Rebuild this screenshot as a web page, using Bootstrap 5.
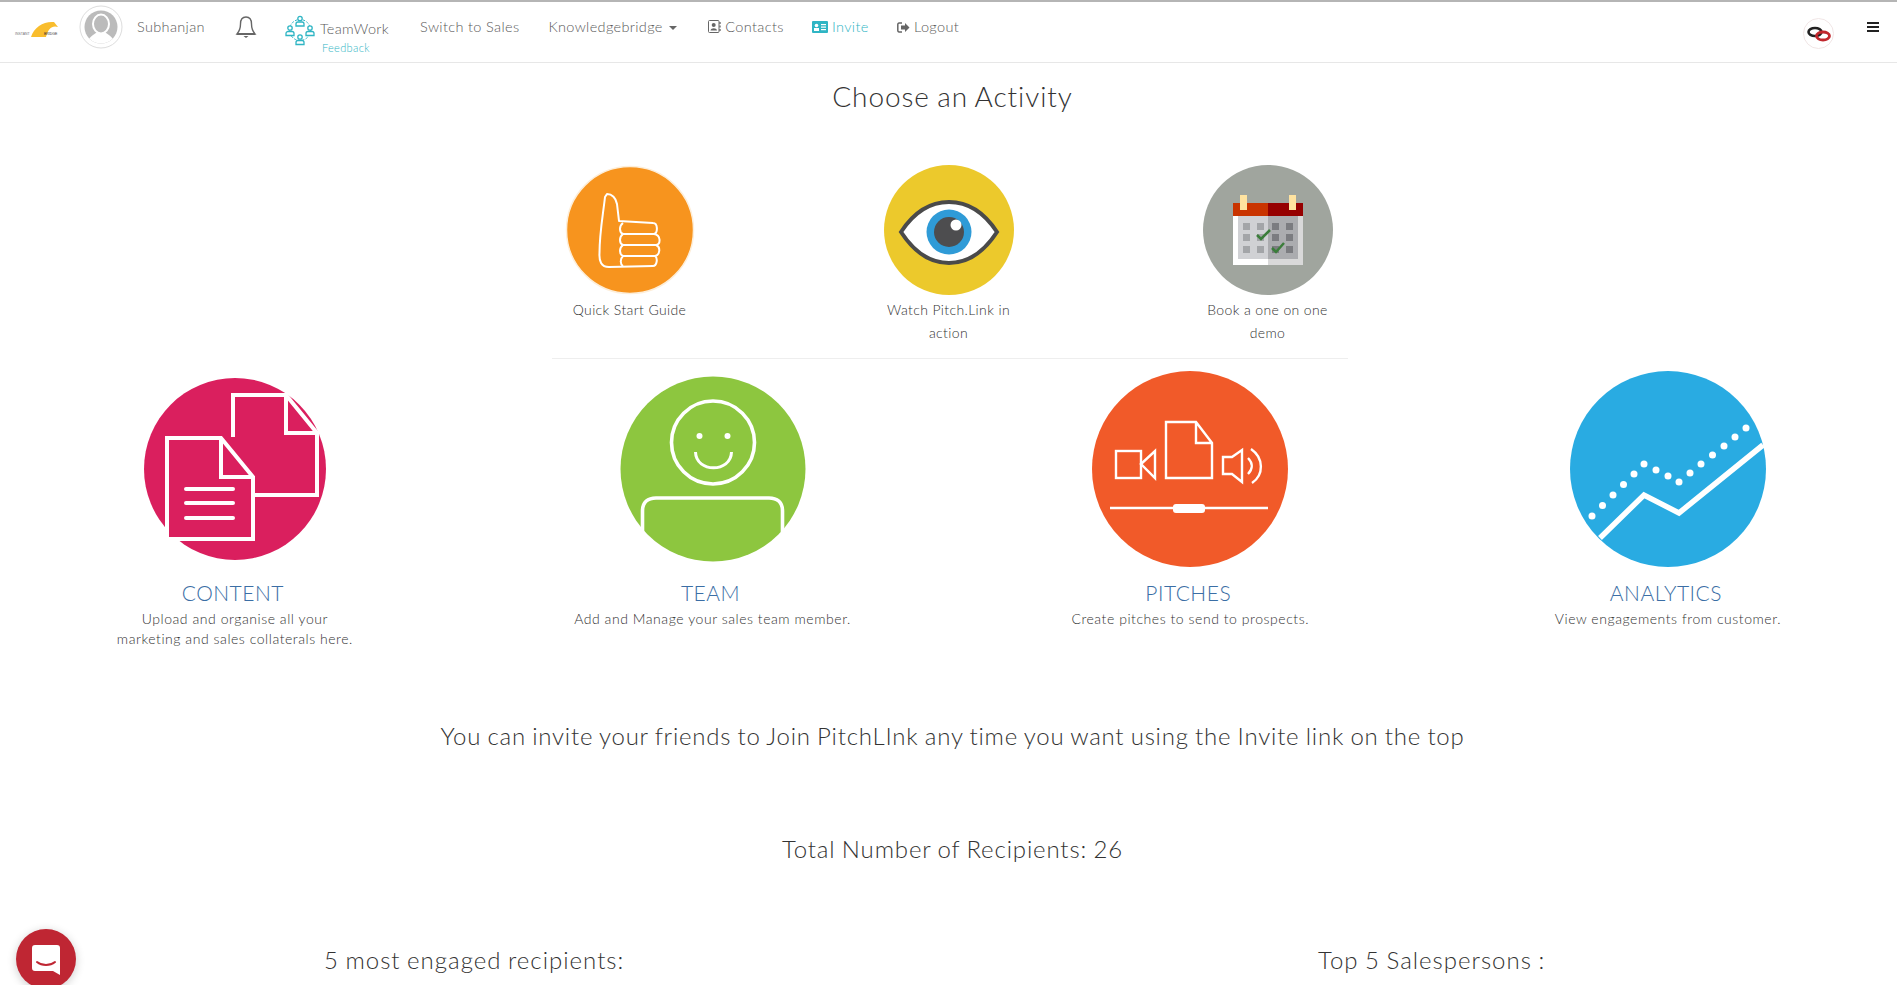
<!DOCTYPE html>
<html lang="en">
<head>
    <meta charset="UTF-8">
    <title>PitchLink</title>
    <link href="https://cdn.jsdelivr.net/npm/bootstrap@5.3.0/dist/css/bootstrap.min.css" rel="stylesheet">
    <style>
        html, body { height: 100%; overflow: hidden; }
        body { font-family: Lato, "Open Sans", sans-serif; font-weight: 300; color: #333; background: #fff; border-top: 2px solid #b5b5b5; }
        .top-bar { height: 61px; border-bottom: 1px solid #e7e7e7; padding: 0 0 10px 14px; }
        .top-link { color: #5a5a5a; font-size: 14.5px; text-decoration: none; letter-spacing: .35px; white-space: nowrap; }
        .top-link svg { vertical-align: -1px; }
        .teal-link { color: #2fb5c4; }
        .brand-logo { margin-top: 6px; margin-right: 8px; }
        .user-pic { margin-left: 9px; }
        .user-name { margin-left: 14px; }
        .bell-icon { margin-left: 30px; }
        .team-icon { margin-left: 27px; margin-top: 6px; }
        .team-stack { line-height: 1; position: relative; margin-top: 2px; margin-left: 4px; }
        .feedback-link { position: absolute; left: 2px; top: 22px; font-size: 11px; color: #2fb5c4; }
        .gap-switch { margin-left: 31px; }
        .gap-know { margin-left: 29px; }
        .gap-contacts { margin-left: 31px; }
        .gap-invite { margin-left: 28px; }
        .gap-logout { margin-left: 28px; }
        .caret-down { display: inline-block; border-top: 4px solid #666; border-left: 4px solid transparent; border-right: 4px solid transparent; vertical-align: 2px; margin-left: 2px; }
        .link-badge { width: 31px; height: 31px; border: 1px solid #f1e6e6; border-radius: 50%; margin-right: 33px; margin-top: 13px; }
        .burger-icon { width: 12px; height: 10px; border-top: 2px solid #222; border-bottom: 2px solid #222; position: relative; margin-right: 18px; }
        .burger-icon::after { content: ""; position: absolute; left: 0; right: 0; top: 2px; border-top: 2px solid #222; }
        .page-title { font-size: 28px; font-weight: 300; color: #333; letter-spacing: .9px; word-spacing: -1px; margin: 16px 0 0; padding-left: 8px; line-height: 34px; }
        .quick-grid { width: 957px; margin-top: 52px; margin-left: 470px; }
        .quick-cell { width: 319px; }
        .quick-label { width: 150px; font-size: 14px; line-height: 23px; letter-spacing: .38px; margin-top: 3px; color: #333; }
        .quick-rule { width: 796px; height: 1px; background: #eee; margin-left: 82px; margin-top: 14px; }
        .module-grid { width: 1912px; margin-left: -4px; margin-top: 11px; }
        .module-cell { width: 477.7px; }
        .module-art { height: 198px; }
        .module-name { font-size: 21px; font-weight: 300; color: #3b6ea5; letter-spacing: .5px; line-height: 26px; margin: 12px 0 3px; padding-right: 4px; }
        .module-text { font-size: 14px; line-height: 20px; color: #333; letter-spacing: .55px; margin: 0 auto; }
        .module-wrap { width: 245px; }
        .big-line { font-size: 24px; color: #333; letter-spacing: .85px; word-spacing: -1px; line-height: 30px; }
        .invite-line { letter-spacing: .78px; margin-top: 72px; padding-left: 8px; }
        .total-line { margin-top: 83px; padding-left: 8px; }
        .bottom-row { margin-top: 81px; padding-left: 324px; }
        .bottom-head { letter-spacing: 1px; }
        .bottom-left { width: 994px; }
        .chat-bubble { position: fixed; left: 16px; top: 929px; width: 60px; height: 60px; border-radius: 50%; background: #bf2633; box-shadow: 0 2px 10px rgba(0,0,0,.2); }
        .chat-glyph { margin-top: 2px; }
    </style>
</head>
<body>
    <nav class="top-bar d-flex align-items-center">
        <svg width="48" height="22" viewBox="0 0 48 22" class="brand-logo flex-shrink-0">
            <path d="M17 18 C20 8 30 2 40 3 L44 8 C38 6 34 10 32 18 Z" fill="#f9bd2d"/>
            <text x="1" y="16" font-size="3.500" fill="#777" font-family="Liberation Sans">INSTANT</text>
            <text x="30" y="16" font-size="3.500" fill="#333" font-family="Liberation Sans">BRIDGE</text>
        </svg>
        <svg width="44" height="44" viewBox="0 0 44 44" class="user-pic flex-shrink-0">
            <defs><clipPath id="avatarClip"><circle cx="22" cy="22" r="16.500"/></clipPath></defs>
            <circle cx="22" cy="22" r="21" fill="#fff" stroke="#ddd"/>
            <circle cx="22" cy="22" r="16.500" fill="#bbb"/>
            <g clip-path="url(#avatarClip)">
                <path d="M7 42 C8 32 15 30 18 27 L26 27 C29 30 36 32 37 42 Z" fill="#fff"/>
                <ellipse cx="22" cy="19" rx="8" ry="9.500" fill="#bbb" stroke="#fff" stroke-width="2"/>
            </g>
        </svg>
        <a href="#" class="top-link user-name">Subhanjan</a>
        <svg width="22" height="24" viewBox="0 0 22 24" class="bell-icon flex-shrink-0">
            <path d="M11 2 C7 2 5.500 5.500 5.500 9 C5.500 14 4.500 16 2 19 L20 19 C17.500 16 16.500 14 16.500 9 C16.500 5.500 15 2 11 2 Z" fill="none" stroke="#666" stroke-width="1.400"/>
            <path d="M2 19 H20" stroke="#666" stroke-width="2"/>
            <path d="M8.500 21 H13.500 L11 23 Z" fill="#666"/>
        </svg>
        <svg width="32" height="32" viewBox="0 0 32 32" class="team-icon flex-shrink-0">
            <circle cx="16" cy="16" r="10.500" fill="none" stroke="#2fb5c4" stroke-width="1" stroke-dasharray="2.500 1.500"/>
            <g fill="#fff" stroke="#2fb5c4" stroke-width="1.300">
                <circle cx="16" cy="4.500" r="2.200"/><path d="M12 12 V10 a2 2 0 0 1 2 -2 h4 a2 2 0 0 1 2 2 V12 Z"/>
                <circle cx="6" cy="14" r="2.200"/><path d="M2 21.500 V19.500 a2 2 0 0 1 2 -2 h4 a2 2 0 0 1 2 2 V21.500 Z"/>
                <circle cx="26" cy="14" r="2.200"/><path d="M22 21.500 V19.500 a2 2 0 0 1 2 -2 h4 a2 2 0 0 1 2 2 V21.500 Z"/>
                <circle cx="16" cy="23" r="2.200"/><path d="M12 30.500 V28.500 a2 2 0 0 1 2 -2 h4 a2 2 0 0 1 2 2 V30.500 Z"/>
            </g>
        </svg>
        <span class="team-stack"><a href="#" class="top-link">TeamWork</a><a href="#" class="top-link feedback-link">Feedback</a></span>
        <a href="#" class="top-link gap-switch">Switch to Sales</a>
        <a href="#" class="top-link gap-know">Knowledgebridge <span class="caret-down"></span></a>
        <a href="#" class="top-link gap-contacts">
            <svg width="13" height="13" viewBox="0 0 13 13"><rect x="0.500" y="0.500" width="10.500" height="12" rx="1" fill="#fff" stroke="#666"/><circle cx="5.700" cy="5" r="2" fill="#666"/><path d="M2.500 10.500 C3 7.500 8.500 7.500 9 10.500 Z" fill="#666"/><path d="M12 2 V4 M12 5.500 V7.500 M12 9 V11" stroke="#666" stroke-width="1.300"/></svg>
            Contacts</a>
        <a href="#" class="top-link teal-link gap-invite">
            <svg width="16" height="12" viewBox="0 0 16 12"><rect width="16" height="12" rx="1" fill="#2fb5c4"/><circle cx="4.500" cy="4.500" r="1.800" fill="#fff"/><rect x="2" y="7" width="5" height="3" fill="#fff"/><rect x="9" y="3" width="5" height="1.200" fill="#fff"/><rect x="9" y="5.500" width="5" height="1.200" fill="#fff"/><rect x="9" y="8" width="5" height="1.200" fill="#fff"/></svg>
            Invite</a>
        <a href="#" class="top-link gap-logout">
            <svg width="13" height="11" viewBox="0 0 13 11"><path d="M5 1 H2 A1.500 1.500 0 0 0 0.800 2.500 V8.500 A1.500 1.500 0 0 0 2 10 H5" fill="none" stroke="#666" stroke-width="1.500"/><path d="M4 3.500 H8 V1 L12.500 5.500 L8 10 V7.500 H4 Z" fill="#666"/></svg>
            Logout</a>
        <div class="link-badge ms-auto d-flex align-items-center justify-content-center flex-shrink-0">
            <svg width="26" height="18" viewBox="0 0 26 18">
                <ellipse cx="9" cy="7" rx="6.500" ry="4" fill="none" stroke="#222" stroke-width="2.600"/>
                <ellipse cx="17" cy="11" rx="6.500" ry="4" fill="none" stroke="#c1272d" stroke-width="2.800"/>
            </svg>
        </div>
        <div class="burger-icon flex-shrink-0"></div>
    </nav>

    <h1 class="page-title text-center">Choose an Activity</h1>

    <div class="quick-grid">
        <div class="d-flex">
            <div class="quick-cell d-flex flex-column align-items-center">
                <svg width="130" height="130" viewBox="0 0 130 130">
                    <circle cx="65" cy="65" r="63.500" fill="#f7941e" stroke="#fdeed9" stroke-width="1.500"/>
                    <path d="M42 29 C47 29 51 33 52 39 L54 56 L88 58 C93 58 93 68 89 69 C96 70 96 79 91 80 C96 82 95 90 90 91 C93 93 92 101 88 101 L44 102 C36 102 34 96 34.500 88 C34.500 68 38 50 40 32 Z" fill="none" stroke="#fff" stroke-width="2" stroke-linejoin="round"/>
                    <path d="M58 58 C54 61 54 67 58 69 L89 69 M58 69 C54 72 54 78 58 80 L91 80 M58 80 C54 83 54 89 58 91 L90 91 M58 91 C55 94 55 99 58 101" fill="none" stroke="#fff" stroke-width="2"/>
                </svg>
                <div class="quick-label text-center">Quick Start Guide</div>
            </div>
            <div class="quick-cell d-flex flex-column align-items-center">
                <svg width="130" height="130" viewBox="0 0 130 130">
                    <circle cx="65" cy="65" r="65" fill="#ecc92c"/>
                    <path d="M17 67 C32 44 48 37 65 37 C82 37 98 44 113 67 C98 90 82 98 65 98 C48 98 32 90 17 67 Z" fill="#fff" stroke="#4a4a4a" stroke-width="4"/>
                    <circle cx="65" cy="67" r="22.500" fill="#2f9bd7"/>
                    <circle cx="65" cy="67" r="15" fill="#4d4d4f"/>
                    <circle cx="72" cy="60" r="5.500" fill="#fff"/>
                </svg>
                <div class="quick-label text-center">Watch Pitch.Link in action</div>
            </div>
            <div class="quick-cell d-flex flex-column align-items-center">
                <svg width="130" height="130" viewBox="0 0 130 130">
                    <circle cx="65" cy="65" r="65" fill="#a0a59e"/>
                    <rect x="30" y="38" width="35" height="13" fill="#c93400"/>
                    <rect x="65" y="38" width="35" height="13" fill="#960000"/>
                    <rect x="37" y="30" width="7" height="15" fill="#ffe3a0"/>
                    <rect x="86" y="30" width="7" height="15" fill="#ffe3a0"/>
                    <rect x="30" y="51" width="35" height="49" fill="#fff"/>
                    <rect x="65" y="51" width="35" height="49" fill="#d9d9d9"/>
                    <rect x="35" y="51" width="30" height="43" fill="#d0d1d4"/>
                    <rect x="65" y="51" width="30" height="43" fill="#abacaf"/>
                    <g fill="#a3a5a8">
                        <rect x="40" y="58" width="7" height="7"/><rect x="54" y="58" width="7" height="7"/>
                        <rect x="40" y="69" width="7" height="7"/><rect x="54" y="69" width="7" height="7"/>
                        <rect x="40" y="81" width="7" height="7"/><rect x="54" y="81" width="7" height="7"/>
                    </g>
                    <g fill="#7b7c80">
                        <rect x="69" y="58" width="7" height="7"/><rect x="83" y="58" width="7" height="7"/>
                        <rect x="69" y="69" width="7" height="7"/><rect x="83" y="69" width="7" height="7"/>
                        <rect x="69" y="81" width="7" height="7"/><rect x="83" y="81" width="7" height="7"/>
                    </g>
                    <path d="M54 70 L58 74 L67 65 M69 83 L73 87 L81 78" fill="none" stroke="#3b7d3a" stroke-width="2.500"/>
                </svg>
                <div class="quick-label text-center">Book a one on one demo</div>
            </div>
        </div>
        <div class="quick-rule"></div>
    </div>

    <div class="module-grid d-flex">
        <div class="module-cell text-center">
            <div class="module-art d-flex justify-content-center align-items-center">
                <svg width="184" height="184" viewBox="0 0 184 184">
                    <circle cx="92" cy="92" r="91" fill="#da1f5e"/>
                    <path d="M90 60 V18 H143 L174 56 V118 H110" fill="none" stroke="#fff" stroke-width="4"/>
                    <path d="M143 18 V56 H174" fill="none" stroke="#fff" stroke-width="4"/>
                    <path d="M24 61 H78 L110 100 V162 H24 Z" fill="#da1f5e" stroke="#fff" stroke-width="4"/>
                    <path d="M78 61 V100 H110" fill="none" stroke="#fff" stroke-width="4"/>
                    <path d="M43 112 H90 M43 126 H90 M43 141 H90" stroke="#fff" stroke-width="4" stroke-linecap="round"/>
                </svg>
            </div>
            <h2 class="module-name">CONTENT</h2>
            <p class="module-text module-wrap">Upload and organise all your marketing and sales collaterals here.</p>
        </div>
        <div class="module-cell text-center">
            <div class="module-art d-flex justify-content-center align-items-center">
                <svg width="186" height="186" viewBox="0 0 186 186">
                    <circle cx="93" cy="93" r="92.500" fill="#8dc63f"/>
                    <ellipse cx="93" cy="66.500" rx="41.500" ry="41.500" fill="none" stroke="#fff" stroke-width="3.600"/>
                    <circle cx="79.500" cy="60" r="3" fill="#fff"/><circle cx="107.500" cy="60" r="3" fill="#fff"/>
                    <path d="M75.500 76 C76 97 111 97 111.500 76" fill="none" stroke="#fff" stroke-width="3"/>
                    <path d="M22.500 156 V135 C22.500 126 28 122 36 122 H149 C157 122 162.500 126 162.500 135 V156" fill="none" stroke="#fff" stroke-width="3.600"/>
                </svg>
            </div>
            <h2 class="module-name">TEAM</h2>
            <p class="module-text">Add and Manage your sales team member.</p>
        </div>
        <div class="module-cell text-center">
            <div class="module-art d-flex justify-content-center align-items-center">
                <svg width="196" height="196" viewBox="0 0 196 196">
                    <circle cx="98" cy="98" r="98" fill="#f15a29"/>
                    <rect x="24" y="80" width="25" height="27" fill="none" stroke="#fff" stroke-width="2.400"/>
                    <path d="M49 93 L63 80 V107 Z" fill="none" stroke="#fff" stroke-width="2.400"/>
                    <path d="M74 51 H104 L120 72 V107 H74 Z M104 51 V72 H120" fill="none" stroke="#fff" stroke-width="2.400"/>
                    <path d="M131 86 H140 L150 79 V111 L140 103 H131 Z" fill="none" stroke="#fff" stroke-width="2.400"/>
                    <path d="M156 87 C161 92 161 98 156 103 M159 78 C172 87 172 104 160 112" fill="none" stroke="#fff" stroke-width="2.400"/>
                    <path d="M18 137 H176" stroke="#fff" stroke-width="2.400"/>
                    <rect x="81" y="133" width="32" height="9" rx="3" fill="#fff"/>
                </svg>
            </div>
            <h2 class="module-name">PITCHES</h2>
            <p class="module-text">Create pitches to send to prospects.</p>
        </div>
        <div class="module-cell text-center">
            <div class="module-art d-flex justify-content-center align-items-center">
                <svg width="196" height="196" viewBox="0 0 196 196">
                    <circle cx="98" cy="98" r="98" fill="#29abe2"/>
                    <path d="M30 167 L74 124 L109 142 L193 74" fill="none" stroke="#fff" stroke-width="5.500"/>
                    <g fill="#fff">
                        <circle cx="22" cy="145" r="3.500"/><circle cx="32.500" cy="134.500" r="3.500"/><circle cx="43" cy="124" r="3.500"/>
                        <circle cx="53.500" cy="113.500" r="3.500"/><circle cx="64" cy="103" r="3.500"/><circle cx="74" cy="93" r="3.500"/>
                        <circle cx="86" cy="99" r="3.500"/><circle cx="98" cy="105" r="3.500"/><circle cx="109" cy="111" r="3.500"/>
                        <circle cx="120" cy="102" r="3.500"/><circle cx="131" cy="93" r="3.500"/><circle cx="142.500" cy="84" r="3.500"/>
                        <circle cx="154" cy="75" r="3.500"/><circle cx="165" cy="66" r="3.500"/><circle cx="176" cy="57" r="3.500"/>
                    </g>
                </svg>
            </div>
            <h2 class="module-name">ANALYTICS</h2>
            <p class="module-text">View engagements from customer.</p>
        </div>
    </div>

    <div class="big-line invite-line text-center">You can invite your friends to Join PitchLInk any time you want using the Invite link on the top</div>
    <div class="big-line total-line text-center">Total Number of Recipients: 26</div>
    <div class="bottom-row d-flex">
        <div class="big-line bottom-head bottom-left">5 most engaged recipients:</div>
        <div class="big-line bottom-head">Top 5 Salespersons :</div>
    </div>

    <div class="chat-bubble d-flex align-items-center justify-content-center">
        <svg width="30" height="32" viewBox="0 0 30 32" class="chat-glyph">
            <path d="M4 1 H26 A3 3 0 0 1 29 4 V31 L22 27 H4 A3 3 0 0 1 1 24 V4 A3 3 0 0 1 4 1 Z" fill="#fff"/>
            <path d="M6 18 C11 22 19 22 24 18" fill="none" stroke="#bf2633" stroke-width="2" stroke-linecap="round"/>
        </svg>
    </div>
    <script src="https://cdn.jsdelivr.net/npm/bootstrap@5.3.0/dist/js/bootstrap.bundle.min.js"></script>
</body>
</html>
